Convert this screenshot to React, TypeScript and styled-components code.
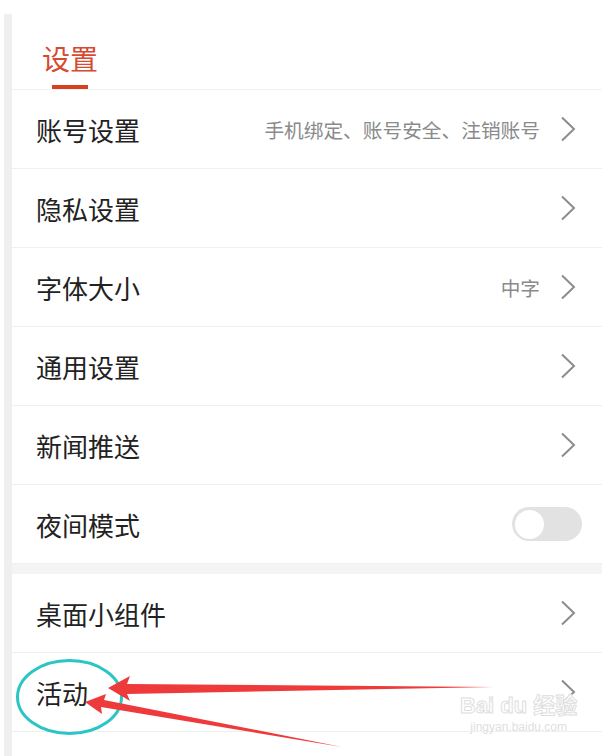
import * as React from "react";
import styled, { createGlobalStyle } from "styled-components";

const GlobalStyle = createGlobalStyle`
  html, body {
    margin: 0;
    padding: 0;
    background: #fff;
    overflow: hidden;
  }
  body {
    font-family: "Noto Sans CJK SC", "Noto Sans", sans-serif;
  }
`;

const Page = styled.div`
  position: relative;
  display: flex;
  width: 602px;
  height: 756px;
  overflow: hidden;
  background: #fff;
`;

const Rail = styled.div`
  width: 8px;
  margin: 14px 0 0 4px;
  background: #efefef;
  flex-shrink: 0;
`;

const Main = styled.div`
  flex: 1;
  display: flex;
  flex-direction: column;

  & > * {
    flex-shrink: 0;
  }
`;

const Header = styled.div`
  height: 89px;
  padding-left: 30px;
  border-bottom: 1px solid #f2f2f2;
  display: flex;
  flex-direction: column;
  justify-content: flex-end;
`;

const Title = styled.div`
  font-size: 28px;
  line-height: 32px;
  color: #d64a32;
  margin-bottom: 11px;
`;

const TitleBar = styled.div`
  width: 36px;
  height: 4px;
  margin-left: 10px;
  background: #d9401f;
`;

const Row = styled.div`
  height: 78px;
  display: flex;
  align-items: center;
  padding: 0 26px 0 24px;
  border-bottom: 1px solid #efefef;
`;

const Label = styled.div`
  flex: 1;
  font-size: 26px;
  color: #222;
`;

const Note = styled.span`
  font-size: 19.7px;
  color: #8a8a8a;
  margin-right: 20px;
`;

const GroupGap = styled.div`
  height: 10px;
  background: #f4f4f4;
`;

const Toggle = styled.div`
  width: 70px;
  height: 34px;
  border-radius: 17px;
  background: #e2e2e2;
  margin-right: -6px;
  display: flex;
  align-items: center;
  padding-left: 3px;
  box-sizing: border-box;
`;

const Knob = styled.div`
  width: 29px;
  height: 29px;
  border-radius: 50%;
  background: #fff;
`;

const Overlay = styled.svg`
  position: absolute;
  left: 0;
  top: 0;
  pointer-events: none;
`;

const Watermark = styled.div`
  position: absolute;
  left: 460px;
  top: 692px;
  display: flex;
  flex-direction: column;
  align-items: center;
  white-space: nowrap;
  color: #fff;
  -webkit-text-stroke: 1px #dedede;
  font-family: "Liberation Sans", "Noto Sans CJK SC", sans-serif;
`;

const MarkMain = styled.div`
  font-size: 22px;
  line-height: 28px;
  font-weight: bold;
`;

const MarkSub = styled.div`
  font-size: 12px;
  line-height: 14px;
  -webkit-text-stroke: 0;
  color: #e0e0e0;
`;

const Chevron = () => (
  <svg width="16" height="26" viewBox="0 0 16 26">
    <path d="M2 1.5 L14 13 L2 24.5" fill="none" stroke="#8c8c8c" strokeWidth="2" />
  </svg>
);

type Item = { label: string; note?: string; toggle?: boolean };

const groupA: Item[] = [
  { label: "账号设置", note: "手机绑定、账号安全、注销账号" },
  { label: "隐私设置" },
  { label: "字体大小", note: "中字" },
  { label: "通用设置" },
  { label: "新闻推送" },
  { label: "夜间模式", toggle: true },
];

const groupB: Item[] = [{ label: "桌面小组件" }, { label: "活动" }, { label: "" }];

const SettingRow = ({ item }: { item: Item }) => (
  <Row>
    <Label>{item.label}</Label>
    {item.note && <Note>{item.note}</Note>}
    {item.toggle ? (
      <Toggle>
        <Knob />
      </Toggle>
    ) : (
      item.label && <Chevron />
    )}
  </Row>
);

const App = () => (
  <>
    <GlobalStyle />
    <Page>
      <Rail />
      <Main>
        <Header>
          <Title>设置</Title>
          <TitleBar />
        </Header>
        {groupA.map((it) => (
          <SettingRow key={it.label} item={it} />
        ))}
        <GroupGap />
        {groupB.map((it, i) => (
          <SettingRow key={i} item={it} />
        ))}
      </Main>
      <Watermark>
        <MarkMain>Bai du 经验</MarkMain>
        <MarkSub>jingyan.baidu.com</MarkSub>
      </Watermark>
      <Overlay width="602" height="756" viewBox="0 0 602 756">
        <ellipse cx="69.5" cy="697" rx="52" ry="36.5" fill="none" stroke="#2cc5c5" strokeWidth="3" />
        <path d="M108 688 L130 676 L127 684 L494 687 L127 694 L130 701 Z" fill="#ee3a3a" />
        <path d="M85 702 L106 694 L104 700 L342 747 L101 707 L102 714 Z" fill="#ee3a3a" />
      </Overlay>
    </Page>
  </>
);

export default App;
